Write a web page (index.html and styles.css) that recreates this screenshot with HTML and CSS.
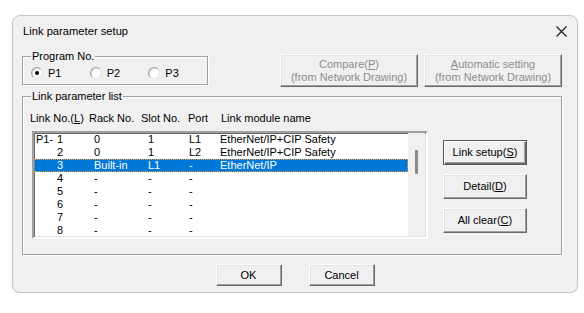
FILE: index.html
```html
<!DOCTYPE html>
<html lang="en">
<head>
    <meta charset="UTF-8">
    <title>Link parameter setup</title>
    <link rel="stylesheet" href="styles.css">
</head>
<body>
    <div class="dialog">
        <div class="titlebar">
            <span class="title">Link parameter setup</span>
            <svg class="close" width="11" height="11" viewBox="0 0 11 11">
                <path d="M0.5 0.5 L10.5 10.5 M10.5 0.5 L0.5 10.5" stroke="#1a1a1a" stroke-width="1.1" fill="none"/>
            </svg>
        </div>

        <div class="content">
            <div class="top-row">
                <div class="group program-group">
                    <span class="legend">Program No.</span>
                    <div class="radios">
                        <label class="radio"><span class="dot checked"></span>P1</label>
                        <label class="radio"><span class="dot"></span>P2</label>
                        <label class="radio"><span class="dot"></span>P3</label>
                    </div>
                </div>
                <div class="top-buttons">
                    <button class="btn btn-wide" disabled>Compare(<u>P</u>)<br>(from Network Drawing)</button>
                    <button class="btn btn-wide" disabled><u>A</u>utomatic setting<br>(from Network Drawing)</button>
                </div>
            </div>

            <div class="group list-group">
                <span class="legend">Link parameter list</span>
                <div class="headers">
                    <span>Link No.(<u>L</u>)</span>
                    <span>Rack No.</span>
                    <span>Slot No.</span>
                    <span>Port</span>
                    <span>Link module name</span>
                </div>
                <div class="list-body">
                    <div class="listbox">
                        <div class="rows">
                            <div class="row"><span class="linkno"><span>P1-</span><span>1</span></span><span>0</span><span>1</span><span>L1</span><span>EtherNet/IP+CIP Safety</span></div>
                            <div class="row"><span class="linkno"><span></span><span>2</span></span><span>0</span><span>1</span><span>L2</span><span>EtherNet/IP+CIP Safety</span></div>
                            <div class="row selected"><span class="linkno"><span></span><span>3</span></span><span>Built-in</span><span>L1</span><span>-</span><span>EtherNet/IP</span></div>
                            <div class="row"><span class="linkno"><span></span><span>4</span></span><span>-</span><span>-</span><span>-</span><span></span></div>
                            <div class="row"><span class="linkno"><span></span><span>5</span></span><span>-</span><span>-</span><span>-</span><span></span></div>
                            <div class="row"><span class="linkno"><span></span><span>6</span></span><span>-</span><span>-</span><span>-</span><span></span></div>
                            <div class="row"><span class="linkno"><span></span><span>7</span></span><span>-</span><span>-</span><span>-</span><span></span></div>
                            <div class="row"><span class="linkno"><span></span><span>8</span></span><span>-</span><span>-</span><span>-</span><span></span></div>
                        </div>
                        <div class="vscroll"><div class="thumb"></div></div>
                    </div>
                    <div class="side-buttons">
                        <button class="btn btn-side btn-default">Link setup(<u>S</u>)</button>
                        <button class="btn btn-side">Detail(<u>D</u>)</button>
                        <button class="btn btn-side">All clear(<u>C</u>)</button>
                    </div>
                </div>
            </div>

            <div class="footer">
                <button class="btn btn-footer">OK</button>
                <button class="btn btn-footer">Cancel</button>
            </div>
        </div>
    </div>
</body>
</html>
```

FILE: styles.css
```css
* {
    margin: 0;
    padding: 0;
    box-sizing: border-box;
}

body {
    background: #ffffff;
    font-family: "Liberation Sans", Arial, sans-serif;
    font-size: 11px;
    color: #000;
    padding: 15px 0 0 12px;
}

.dialog {
    width: 566px;
    height: 278px;
    background: #f0f0f0;
    border: 1px solid #c6c6c6;
    border-radius: 8px;
    box-shadow: 0 1px 3px rgba(0, 0, 0, 0.08);
}

.titlebar {
    height: 30px;
    display: flex;
    align-items: center;
    justify-content: space-between;
    padding: 0 10px 0 10px;
}

.title {
    font-size: 11.2px;
}

.close {
    display: block;
}

.content {
    padding: 8px 15px 0 9px;
}

/* group boxes */
.group {
    position: relative;
    border: 1px solid #a0a0a0;
    box-shadow: inset 1px 1px 0 #fff, 1px 1px 0 #fff;
}

.legend {
    position: absolute;
    top: -7px;
    left: 8px;
    padding: 0 1px;
    line-height: 13px;
    background: #f0f0f0;
}

.top-row {
    display: flex;
    justify-content: space-between;
    align-items: flex-start;
    height: 33px;
}

.program-group {
    width: 186px;
    height: 29px;
    margin-top: 2px;
    padding: 9px 0 0 8px;
}

.radios {
    display: flex;
    height: 14px;
}

.radio {
    width: 62px;
    display: flex;
    align-items: center;
    gap: 5px;
    line-height: 14px;
}

.dot {
    width: 12px;
    height: 12px;
    border-radius: 50%;
    background: #fff;
    border: 1px solid;
    border-color: #a0a0a0 #e3e3e3 #e3e3e3 #a0a0a0;
    box-shadow: inset 1px 1px 0 #dcdcdc;
    display: flex;
    align-items: center;
    justify-content: center;
}

.dot.checked::after {
    content: "";
    width: 4px;
    height: 4px;
    border-radius: 50%;
    background: #000;
}

.top-buttons {
    display: flex;
    gap: 6px;
}

/* classic buttons */
.btn {
    font-family: inherit;
    font-size: 11px;
    color: #000;
    background: #f0f0f0;
    border: 1px solid;
    border-color: #fff #696969 #696969 #fff;
    box-shadow: inset -1px -1px 0 #a0a0a0, inset 1px 1px 0 #e3e3e3;
    line-height: 13px;
    text-align: center;
}

.btn:disabled {
    color: #8d8d8d;
}

.btn-wide {
    width: 138px;
    height: 33px;
}

.list-group {
    margin-top: 9px;
    height: 159px;
    padding: 15px 0 0 7px;
}

.headers {
    display: grid;
    grid-template-columns: 59px 52px 47px 33px 1fr;
    height: 13px;
    line-height: 13px;
}

.list-body {
    display: flex;
    margin-top: 6px;
    margin-left: 2px;
}

.listbox {
    width: 396px;
    height: 108px;
    display: flex;
    background: #fff;
    border: 2px solid;
    border-color: #a0a0a0 #fff #fff #a0a0a0;
    box-shadow: inset 1px 1px 0 #696969, inset -1px -1px 0 #e3e3e3;
    padding: 0 1px 1px 0;
}

.rows {
    flex: 1;
}

.row {
    display: grid;
    grid-template-columns: 58px 54px 41px 31px 1fr;
    height: 13px;
    line-height: 13px;
    padding-left: 2px;
    white-space: nowrap;
}

.linkno {
    width: 27px;
    display: flex;
    justify-content: space-between;
}

.row.selected {
    background: #0078d7;
    color: #fff;
    outline: 1px dotted #f39c3a;
    outline-offset: -1px;
}

.vscroll {
    width: 17px;
    background: #f0f0f0;
    padding-top: 17px;
}

.thumb {
    width: 3px;
    height: 24px;
    margin-left: 7px;
    background: #8a8a8a;
    border-radius: 1px;
}

.side-buttons {
    display: flex;
    flex-direction: column;
    gap: 9px;
    margin: 9px 0 0 15px;
}

.btn-side {
    width: 84px;
    height: 25px;
}

.btn-default {
    border: 1px solid #5a5a5a;
    box-shadow: inset 1px 1px 0 #fff, inset -1px -1px 0 #696969, inset -2px -2px 0 #a0a0a0;
}

.footer {
    display: flex;
    justify-content: center;
    gap: 27px;
    margin-top: 9px;
    padding-left: 6px;
}

.btn-footer {
    width: 66px;
    height: 22px;
}
```
